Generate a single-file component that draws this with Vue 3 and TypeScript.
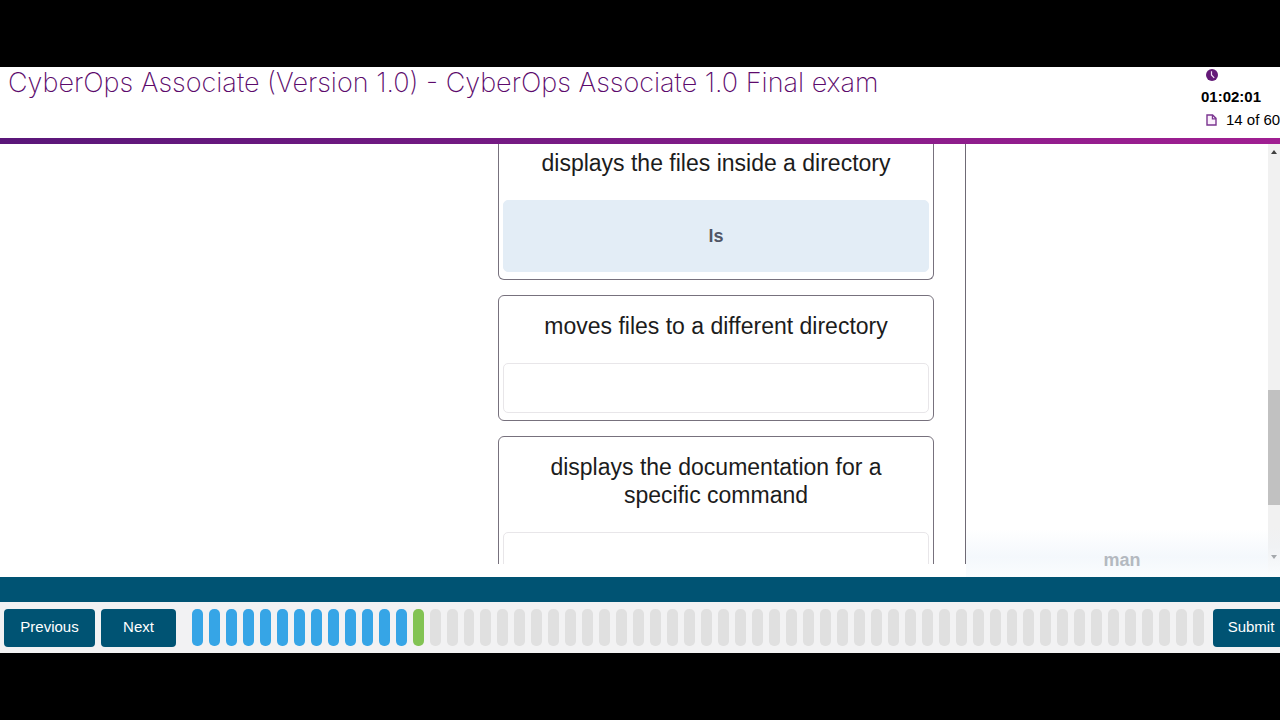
<script setup lang="ts">
interface Target {
  prompt: string
  answer: string | null
}

const targets: Target[] = [
  { prompt: 'displays the files inside a directory', answer: 'ls' },
  { prompt: 'moves files to a different directory', answer: null },
  { prompt: 'displays the documentation for a specific command', answer: null },
]

const total = 60
const current = 14

function pillState(n: number): string {
  if (n < current) return 'done'
  return n === current ? 'current' : 'todo'
}
</script>

<template>
  <div class="screen">
    <header class="header">
      <h1 class="title">CyberOps Associate (Version 1.0) - CyberOps Associate 1.0 Final exam</h1>
      <div class="status">
        <svg class="clock" viewBox="0 0 12 12" aria-hidden="true">
          <circle cx="6" cy="6" r="6" fill="#641a78" />
          <path d="M5.5 2.2V6L8.2 8.8" fill="none" stroke="#f3dff6" stroke-width="1.2" />
        </svg>
        <div class="time">01:02:01</div>
        <div class="count">
          <svg class="page" viewBox="0 0 11 12" aria-hidden="true">
            <path d="M1 1H6.6L10 4.4V11H1Z" fill="#fbf0fc" stroke="#7b3590" stroke-width="1.4" />
            <path d="M6.4 1V4.8H10" fill="none" stroke="#7b3590" stroke-width="1.2" />
          </svg>
          <span>{{ current }} of {{ total }}</span>
        </div>
      </div>
    </header>

    <main class="body">
      <section class="board">
        <article v-for="t in targets" :key="t.prompt" class="card">
          <p class="prompt">{{ t.prompt }}</p>
          <div class="slot" :class="{ filled: t.answer }">{{ t.answer }}</div>
        </article>
      </section>
      <section class="choices">
        <div class="choice">man</div>
      </section>
      <div class="scrollbar">
        <svg class="arrow" viewBox="0 0 6 4" aria-hidden="true"><path d="M0 4L3 0L6 4Z" fill="#404040" /></svg>
        <div class="thumb"></div>
        <svg class="arrow" viewBox="0 0 6 4" aria-hidden="true"><path d="M0 0L3 4L6 0Z" fill="#a4a8ac" /></svg>
      </div>
    </main>

    <div class="band"></div>

    <footer class="footer">
      <button class="btn previous" type="button">Previous</button>
      <button class="btn next" type="button">Next</button>
      <div class="pills">
        <span v-for="n in total" :key="n" class="pill" :class="pillState(n)"></span>
      </div>
      <button class="btn submit" type="button">Submit</button>
    </footer>
  </div>
</template>

<style>
body {
  background: #000;
}
</style>

<style scoped>
.screen {
  box-sizing: border-box;
  display: flex;
  flex-direction: column;
  height: 100vh;
  padding: 67px 0;
  overflow: hidden;
  background: #000;
  color: #1c1c1c;
  font-family: "Liberation Sans", Arial, sans-serif;
}

.header {
  display: flex;
  justify-content: space-between;
  box-sizing: border-box;
  height: 77px;
  flex: none;
  padding-left: 8px;
  background: #fff;
  border-bottom: 6px solid;
  border-image: linear-gradient(90deg, #5a1679, #7c1b86 50%, #a01f92) 1;
}

.title {
  margin: 0;
  font-family: Inter, sans-serif;
  font-size: 27px;
  font-weight: 200;
  line-height: 32px;
  color: #5c0a6c;
  white-space: nowrap;
}

.status {
  flex: none;
  width: 79px;
  padding-top: 2px;
  font-size: 15px;
  color: #000;
  white-space: nowrap;
}

.clock {
  display: block;
  width: 12px;
  height: 12px;
  margin-left: 5px;
}

.time {
  margin-top: 5px;
  font-weight: 700;
  line-height: 22px;
}

.count {
  display: flex;
  align-items: center;
  gap: 9px;
  margin-left: 5px;
  line-height: 24px;
}

.page {
  flex: none;
  width: 11px;
  height: 12px;
}

.body {
  display: flex;
  flex: 1;
  min-height: 0;
  background: #fff;
}

.board {
  display: flex;
  flex-direction: column;
  gap: 15px;
  box-sizing: border-box;
  width: 966px;
  flex: none;
  margin-bottom: 13px;
  padding: 0 31px 0 498px;
  border-right: 1px solid #6f6a75;
  overflow: hidden;
}

.card {
  flex: none;
  padding: 16px 4px 7px;
  border: 1px solid #77717d;
  border-radius: 6px;
}

.card:first-child {
  padding-top: 5px;
  border-top: 0;
  border-radius: 0 0 6px 6px;
}

.prompt {
  margin: 0 32px 23px;
  font-size: 23px;
  line-height: 28px;
  text-align: center;
}

.slot {
  box-sizing: border-box;
  height: 50px;
  border: 1px solid #e8e6e9;
  border-radius: 5px;
}

.slot.filled {
  height: 72px;
  border-color: #e3edf6;
  background: #e3edf6;
  font-size: 18px;
  font-weight: 700;
  line-height: 70px;
  text-align: center;
  color: #505565;
}

.choices {
  display: flex;
  flex: 1;
  align-items: flex-end;
  justify-content: center;
  padding-left: 10px;
  background: linear-gradient(0deg, #fafcfe, #f4f8fc 20px, #fff 48px);
}

.choice {
  padding-bottom: 6px;
  font-size: 18px;
  font-weight: 700;
  line-height: 22px;
  color: #b4b9c0;
}

.scrollbar {
  display: flex;
  flex: none;
  flex-direction: column;
  align-items: center;
  justify-content: space-between;
  box-sizing: border-box;
  width: 12px;
  padding: 6px 0 18px;
  background: linear-gradient(0deg, #fafcfe, #f0f2f4 30px, #f1f1f1 50px);
}

.arrow {
  width: 6px;
  height: 4px;
  flex: none;
}

.thumb {
  width: 12px;
  height: 115px;
  margin-top: 186px;
  background: #c1c1c1;
}

.band {
  height: 25px;
  flex: none;
  background: #005373;
}

.footer {
  display: flex;
  align-items: center;
  box-sizing: border-box;
  height: 51px;
  flex: none;
  padding-left: 4px;
  background: #f2f2f3;
}

.btn {
  flex: none;
  height: 38px;
  padding: 0 0 2px;
  border: 0;
  border-radius: 4px;
  background: #005373;
  color: #fff;
  font-family: inherit;
  font-size: 15px;
}

.previous {
  width: 91px;
  margin-right: 6px;
}

.next {
  width: 75px;
}

.pills {
  display: flex;
  flex: 1;
  gap: 6px;
  height: 37px;
  margin: 0 9px 0 16px;
}

.pill {
  flex: 1;
  border-radius: 5px;
}

.done {
  background: #36a5e6;
}

.current {
  background: #82c353;
}

.todo {
  background: #e0e0e0;
}

.submit {
  width: 76px;
  margin-right: -9px;
}
</style>
